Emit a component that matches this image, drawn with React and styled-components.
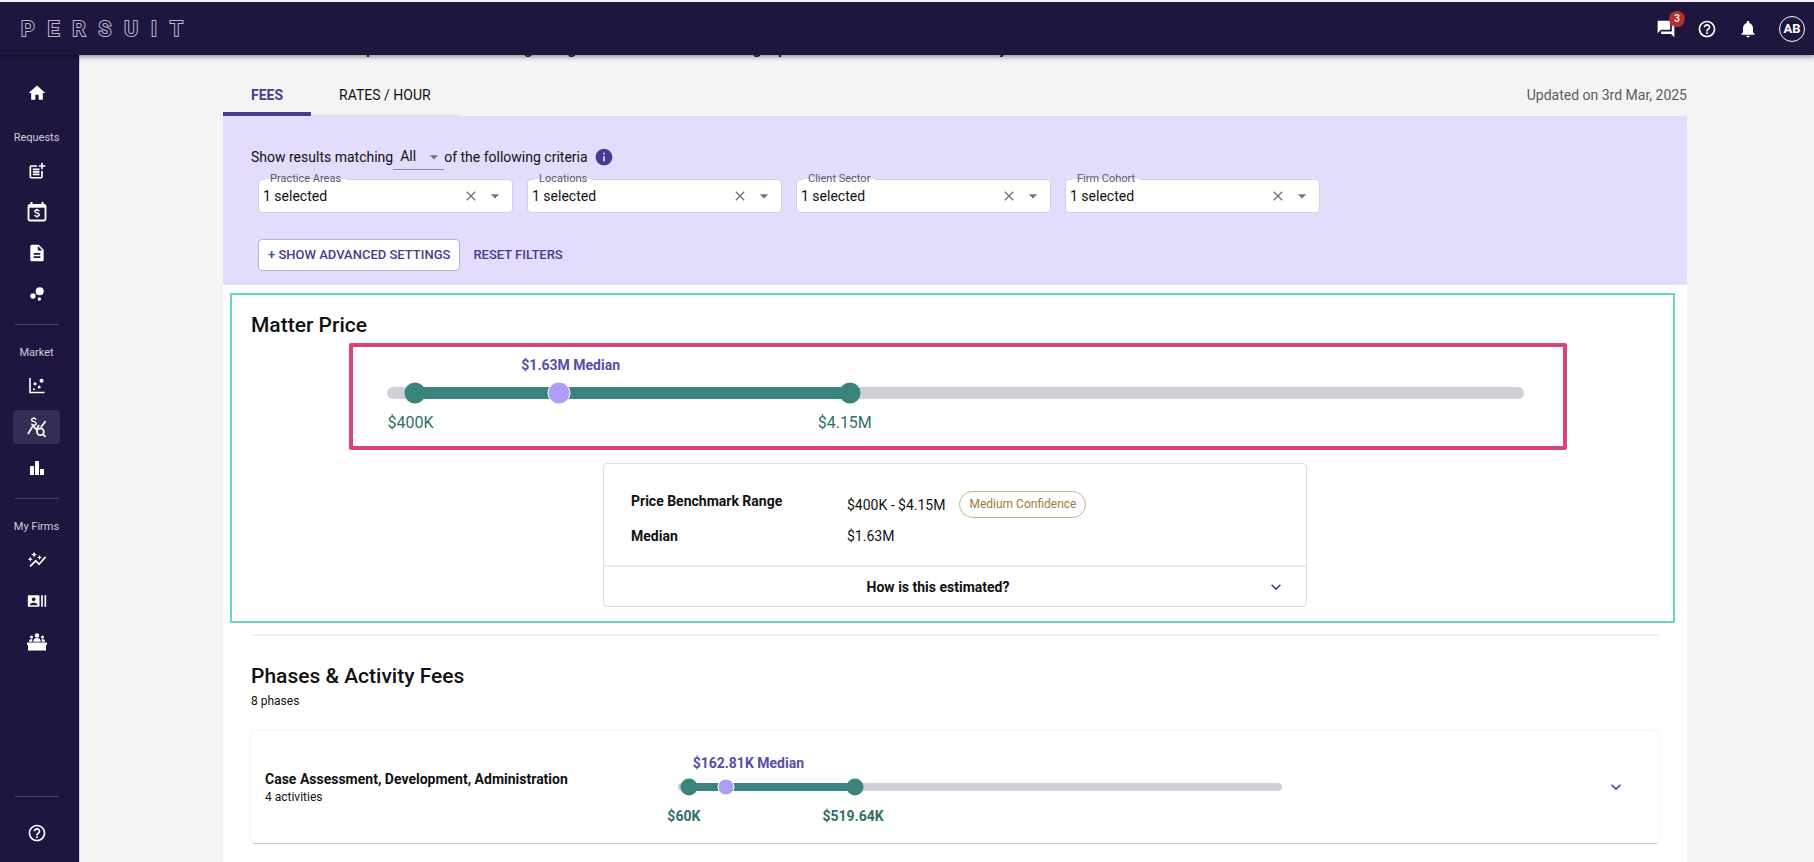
import React, { useState } from 'react';
import styled, { createGlobalStyle, css } from 'styled-components';
import {
  MdHome,
  MdPostAdd,
  MdDescription,
  MdBubbleChart,
  MdAutoGraph,
  MdRecentActors,
  MdHelpOutline,
  MdForum,
  MdNotifications,
  MdClose,
  MdArrowDropDown,
  MdExpandMore,
  MdInfo,
} from 'react-icons/md';

const navy = '#1e163e';
const purple = '#4b3b8f';
const lavender = '#e4dcfc';
const green = '#3b847d';

const GlobalStyle = createGlobalStyle`
  *, *::before, *::after {
    box-sizing: border-box;
  }
  body {
    margin: 0;
    background: #f4f4f4;
    color: #111;
    font-family: Roboto, "Liberation Sans", sans-serif;
    font-size: 14px;
    line-height: 20px;
  }
  button, select {
    font: inherit;
    color: inherit;
  }
  h2, p, dl, dt, dd {
    margin: 0;
  }
`;

const Page = styled.div`
  display: flex;
  flex-direction: column;
  min-height: 100vh;
`;

const Header = styled.header`
  position: relative;
  z-index: 2;
  display: flex;
  align-items: center;
  justify-content: space-between;
  height: 55px;
  padding: 0 9px 0 21px;
  border-top: 2px solid #f4f4f8;
  background: ${navy};
  color: #fff;
  box-shadow: 0 2px 5px rgba(0, 0, 0, 0.4);
`;

const Logo = styled.a`
  display: flex;
  gap: 13px;
  color: ${navy};
  font-size: 21px;
  line-height: 24px;
  font-weight: 500;
  text-decoration: none;
  -webkit-text-stroke: 2px #bdb9cc;
  paint-order: stroke fill;
`;

const HeaderActions = styled.div`
  display: flex;
  align-items: center;
  gap: 21px;
`;

const IconButton = styled.button`
  position: relative;
  display: flex;
  padding: 0;
  border: 0;
  background: none;
  color: inherit;
  cursor: pointer;
`;

const Badge = styled.span`
  position: absolute;
  top: -8px;
  right: -9px;
  width: 16px;
  height: 16px;
  border-radius: 50%;
  background: #b3302b;
  font-size: 10px;
  line-height: 16px;
  font-weight: 500;
  text-align: center;
`;

const Avatar = styled.button`
  width: 26px;
  height: 26px;
  padding: 0;
  border: 1px solid #fff;
  border-radius: 50%;
  background: none;
  color: #fff;
  font-size: 13px;
  line-height: 24px;
  font-weight: 700;
`;

const Body = styled.div`
  display: flex;
  flex: 1;
`;

const Sidebar = styled.nav`
  display: flex;
  flex-direction: column;
  flex: none;
  width: 79px;
  padding: 21px 19px 12px 13px;
  background: ${navy};
  box-shadow: 1px 0 0 #cfcdd8;
  color: #fff;
`;

const NavGroup = styled.div`
  display: flex;
  flex-direction: column;
  align-items: center;
  gap: 7px;
`;

const NavLabel = styled.span`
  margin: 20px 0 1px;
  color: #cfcdd8;
  font-size: 11px;
  line-height: 16px;
  white-space: nowrap;
`;

const NavLink = styled.a`
  display: flex;
  align-items: center;
  justify-content: center;
  width: 47px;
  height: 34px;
  border-radius: 4px;
  color: #fff;
  ${({ $active }) => $active && css`
    background: #352e54;
  `}
`;

const NavDivider = styled.hr`
  width: 44px;
  height: 1px;
  margin: ${({ $bottom }) => ($bottom ? 'auto auto 19px' : '13px auto 0')};
  border: 0;
  background: #4a4463;
`;

const Main = styled.main`
  display: flex;
  flex-direction: column;
  flex: 1;
  min-width: 0;
  padding: 0 127px 0 144px;
`;

const Intro = styled.p`
  margin-top: -18px;
  font-size: 16px;
  line-height: 24px;
  font-weight: 500;
  white-space: nowrap;
`;

const TabBar = styled.div`
  display: flex;
  align-items: center;
  justify-content: space-between;
  margin-top: 13px;
`;

const Tabs = styled.div`
  display: flex;
`;

const Tab = styled.button`
  height: 42px;
  padding: 0 28px;
  border: 0;
  background: none;
  color: ${({ $active }) => ($active ? purple : '#111')};
  font-weight: ${({ $active }) => ($active ? 700 : 400)};
  box-shadow: inset 0 ${({ $active }) => ($active ? `-4px 0 ${purple}` : '-1px 0 #dcdae2')};
`;

const Updated = styled.span`
  color: #5c5c5c;
`;

const Filters = styled.section`
  padding: 28px 28px 14px;
  background: ${lavender};
`;

const MatchRow = styled.div`
  display: flex;
  align-items: center;
  height: 26px;
  color: #111;
`;

const MatchSelect = styled.div`
  position: relative;
  width: 51px;
  height: 26px;
  border-bottom: 1px solid #8d88a0;
  svg {
    position: absolute;
    top: 3px;
    right: 0;
    color: #74717f;
    pointer-events: none;
  }
  select {
    width: 100%;
    height: 24px;
    padding: 0 7px;
    border: 0;
    background: none;
    appearance: none;
  }
`;

const InfoButton = styled(IconButton)`
  margin-left: 6px;
  color: ${purple};
`;

const FieldRow = styled.div`
  display: flex;
  flex-wrap: wrap;
  gap: 14px;
  padding: 9px 7px 0;
`;

const Field = styled.div`
  position: relative;
  width: 255px;
  height: 34px;
  label {
    position: absolute;
    top: -8px;
    left: 7px;
    padding: 0 5px;
    background: linear-gradient(${lavender} 50%, #fff 50%);
    color: #5b5866;
    font-size: 11px;
    line-height: 16px;
  }
  select {
    width: 100%;
    height: 100%;
    padding: 0 60px 0 4px;
    border: 1px solid #d3cfdf;
    border-radius: 4px;
    background: #fff;
    appearance: none;
  }
  > svg {
    position: absolute;
    top: 7px;
    right: 8px;
    color: #74717f;
    pointer-events: none;
  }
`;

const ClearButton = styled(IconButton)`
  position: absolute;
  top: 9px;
  right: 34px;
  color: #74717f;
`;

const FilterActions = styled.div`
  display: flex;
  align-items: center;
  gap: 13px;
  padding: 26px 7px 0;
`;

const FilterButton = styled.button`
  height: 32px;
  padding: ${({ $outlined }) => ($outlined ? '0 9px' : '0')};
  border: ${({ $outlined }) => ($outlined ? '1px solid #b9aee0' : '0')};
  border-radius: 4px;
  background: ${({ $outlined }) => ($outlined ? '#fff' : 'none')};
  color: ${purple};
  font-size: 13px;
  font-weight: 500;
  white-space: nowrap;
`;

const Results = styled.div`
  flex: 1;
  padding-bottom: 19px;
  background: #fff;
`;

const MatterPrice = styled.section`
  margin: 8px 12px 0 7px;
  padding: 18px 14px 14px 19px;
  border: 2px solid #6dd3c8;
`;

const Heading = styled.h2`
  color: #111;
  font-size: 21px;
  line-height: 24px;
  font-weight: 500;
`;

const Highlight = styled.div`
  margin: 6px 92px 0 98px;
  padding: 8px 39px 13px 34px;
  border: 4px solid #d9447f;
  border-radius: 2px;
`;

const Range = styled.div`
  --track: ${({ $small }) => ($small ? 8 : 12)}px;
  --dot: ${({ $small }) => ($small ? 17 : 21)}px;
  --drop: ${({ $small }) => ($small ? 5 : 2)}px;
  display: flex;
  flex-direction: column;
  gap: ${({ $small }) => ($small ? 10 : 12)}px;
  min-width: 0;
  padding-top: ${({ $small }) => ($small ? 5 : 0)}px;
`;

const RangeLabels = styled.div`
  position: relative;
  height: 20px;
  ${({ $below }) => $below && css`
    margin-top: var(--drop);
  `}
`;

const RangeLabel = styled.span`
  position: absolute;
  margin-left: ${({ $shift }) => $shift}px;
  color: ${({ $median }) => ($median ? '#5d4ba6' : '#2f7068')};
  font-size: ${({ $large }) => ($large ? 16 : 14)}px;
  font-weight: ${({ $large }) => ($large ? 400 : 700)};
  white-space: nowrap;
  transform: translateX(-50%);
`;

const Track = styled.div`
  position: relative;
  height: var(--track);
  border-radius: 6px;
  background: #d0cfd5;
`;

const Fill = styled.div`
  position: absolute;
  top: 0;
  height: 100%;
  background: ${green};
`;

const Dot = styled.span`
  position: absolute;
  top: 50%;
  width: var(--dot);
  height: var(--dot);
  border-radius: 50%;
  background: ${green};
  transform: translate(-50%, -50%);
  ${({ $median }) => $median && css`
    box-sizing: ${({ $small }) => ($small ? 'border-box' : 'content-box')};
    border: 1px solid #fff;
    background: #ad9df5;
  `}
`;

const Benchmark = styled.div`
  width: 50%;
  margin: 13px auto 0;
  border: 1px solid #dcdcdc;
  border-radius: 4px;
`;

const BenchmarkList = styled.dl`
  display: grid;
  grid-template-columns: 216px 1fr;
  row-gap: 8px;
  padding: 27px 27px 19px;
  dt {
    font-weight: 700;
  }
  dd {
    display: flex;
    align-items: center;
    gap: 14px;
  }
`;

const Chip = styled.span`
  height: 27px;
  padding: 0 9px;
  border: 1px solid #cdb084;
  border-radius: 14px;
  color: #a17a3a;
  font-size: 12px;
  line-height: 25px;
`;

const EstimateToggle = styled.button`
  display: flex;
  align-items: center;
  width: 100%;
  height: 41px;
  padding: 0 20px 0 6px;
  border: 0;
  border-top: 2px solid #ececec;
  background: none;
  font-weight: 700;
  span {
    flex: 1;
  }
  svg {
    color: ${purple};
  }
`;

const Divider = styled.hr`
  height: 2px;
  margin: 11px 28px 0;
  border: 0;
  background: #f0f0f0;
`;

const Phases = styled.section`
  padding: 28px 28px 0;
`;

const Note = styled.p`
  color: #111;
  font-size: 12px;
  line-height: 16px;
`;

const PhaseCount = styled(Note)`
  margin-top: 5px;
`;

const PhaseCard = styled.article`
  display: grid;
  grid-template-columns: 41fr 60fr 36fr;
  align-items: center;
  height: 112px;
  margin-top: 22px;
  padding: 0 14px;
  border-radius: 4px;
  background: #fff;
  box-shadow: 0 2px 1px -1px rgba(0, 0, 0, 0.2), 0 0 2px rgba(0, 0, 0, 0.14);
`;

const PhaseName = styled.h3`
  margin: 0;
  font-size: 14px;
  line-height: 20px;
  font-weight: 700;
`;

const ExpandButton = styled(IconButton)`
  justify-self: end;
  margin-right: 19px;
  color: ${purple};
`;

function CalendarDollarIcon() {
  return (
    <svg width="20" height="22" viewBox="0 0 20 22" fill="none" stroke="currentColor">
      <rect x="1.5" y="4" width="17" height="15.5" rx="1.5" strokeWidth="1.8" />
      <path d="M1.5 5.2h17" strokeWidth="3" />
      <path d="M4.5 1v3M15.5 1v3" strokeWidth="2" />
      <path d="M12.2 10.2c-.3-.9-1.1-1.2-2.2-1.2-1.2 0-2.1.5-2.1 1.5 0 2 4.4.9 4.4 3.1 0 1-.9 1.6-2.3 1.6-1.3 0-2.2-.5-2.4-1.4M10 7.7V9M10 15.2v1.4" strokeWidth="1.4" />
    </svg>
  );
}

function ScatterIcon() {
  return (
    <svg width="18" height="18" viewBox="0 0 18 18" fill="currentColor">
      <path d="M2 1v14.5h14.5" fill="none" stroke="currentColor" strokeWidth="1.6" />
      <circle cx="13.5" cy="3.8" r="2" />
      <circle cx="7" cy="6.8" r="1.5" />
      <circle cx="11.2" cy="10" r="1.5" />
      <circle cx="6" cy="12.2" r="1" />
    </svg>
  );
}

function PriceSearchIcon() {
  return (
    <svg width="20" height="22" viewBox="0 0 20 22" fill="none" stroke="currentColor" strokeWidth="1.7">
      <path d="M1 18l5-8.2 3.2 3.8L12 9M13.8 11.5L18.6 5" />
      <circle cx="13.4" cy="15.8" r="3.4" />
      <path d="M15.8 18.2l2.8 2.8" />
      <path d="M9 3.8C8.7 2.8 8 2.4 6.8 2.4c-1.3 0-2.2.6-2.2 1.6 0 2.2 4.7 1.1 4.7 3.5 0 1-.9 1.7-2.4 1.7-1.3 0-2.3-.6-2.5-1.6M6.900 1v1.500M6.900 9.200v1.500" strokeWidth="1.4" />
    </svg>
  );
}

function BarsIcon() {
  return (
    <svg width="16" height="16" viewBox="0 0 16 16" fill="currentColor">
      <rect x="1" y="6" width="4" height="9" rx="0.5" />
      <rect x="6" y="1" width="4" height="14" rx="0.5" />
      <rect x="11" y="9" width="4" height="6" rx="0.5" />
    </svg>
  );
}

function PanelIcon() {
  return (
    <svg width="20" height="18" viewBox="0 0 20 18" fill="currentColor">
      <path d="M0 9.500h20v2.500h-1v5.500H1V12H0z" />
      <circle cx="10" cy="2.500" r="2.200" />
      <path d="M6.300 8.700c0-2.500 1.300-3.700 3.700-3.700s3.700 1.200 3.700 3.700z" />
      <circle cx="4.500" cy="4" r="1.500" />
      <circle cx="15.500" cy="4" r="1.500" />
      <path d="M2 8.700c0-2 .8-2.800 3.200-2.800.1.800.1 1.800.1 2.800zM18 8.700c0-2-.8-2.800-3.200-2.800-.1.800-.1 1.800-.1 2.800z" />
    </svg>
  );
}

const navGroups = [
  {
    label: 'Requests',
    links: [
      { name: 'New request', icon: <MdPostAdd size={20} /> },
      { name: 'Quotes', icon: <CalendarDollarIcon /> },
      { name: 'Documents', icon: <MdDescription size={20} /> },
      { name: 'Insights', icon: <MdBubbleChart size={20} /> },
    ],
  },
  {
    label: 'Market',
    links: [
      { name: 'Scatter', icon: <ScatterIcon /> },
      { name: 'Pricing', icon: <PriceSearchIcon />, active: true },
      { name: 'Reports', icon: <BarsIcon /> },
    ],
  },
  {
    label: 'My Firms',
    links: [
      { name: 'Trends', icon: <MdAutoGraph size={20} /> },
      { name: 'Contacts', icon: <MdRecentActors size={20} /> },
      { name: 'Panels', icon: <PanelIcon /> },
    ],
  },
];

const fields = ['Practice Areas', 'Locations', 'Client Sector', 'Firm Cohort'];

function PriceRange({ low, median, high, small }) {
  return (
    <Range $small={small}>
      <RangeLabels>
        <RangeLabel $median $shift={median.shift} style={{ left: `${median.at}%` }}>{median.text} Median</RangeLabel>
      </RangeLabels>
      <Track>
        <Fill style={{ left: `${low.at}%`, width: `${high.at - low.at}%` }} />
        <Dot style={{ left: `${low.at}%` }} />
        <Dot $median $small={small} style={{ left: `${median.at}%` }} />
        <Dot style={{ left: `${high.at}%` }} />
      </Track>
      <RangeLabels $below>
        <RangeLabel $large={!small} $shift={low.shift} style={{ left: `${low.at}%` }}>{low.text}</RangeLabel>
        <RangeLabel $large={!small} $shift={high.shift} style={{ left: `${high.at}%` }}>{high.text}</RangeLabel>
      </RangeLabels>
    </Range>
  );
}

function FilterField({ label }) {
  const id = label.toLowerCase().replace(' ', '-');

  return (
    <Field>
      <select id={id}>
        <option>1 selected</option>
      </select>
      <label htmlFor={id}>{label}</label>
      <ClearButton type="button" aria-label={`Clear ${label}`}><MdClose size={16} /></ClearButton>
      <MdArrowDropDown size={20} />
    </Field>
  );
}

function App() {
  const [tab, setTab] = useState('fees');

  return (
    <Page>
      <GlobalStyle />
      <Header>
        <Logo href="#" aria-label="PERSUIT">
          {'PERSUIT'.split('').map(letter => <span key={letter}>{letter}</span>)}
        </Logo>
        <HeaderActions>
          <IconButton type="button" aria-label="Messages">
            <MdForum size={20} />
            <Badge>3</Badge>
          </IconButton>
          <IconButton type="button" aria-label="Help"><MdHelpOutline size={20} /></IconButton>
          <IconButton type="button" aria-label="Notifications"><MdNotifications size={20} /></IconButton>
          <Avatar type="button">AB</Avatar>
        </HeaderActions>
      </Header>
      <Body>
        <Sidebar>
          <NavGroup>
            <NavLink href="#" aria-label="Home"><MdHome size={20} /></NavLink>
          </NavGroup>
          {navGroups.map((group, i) => (
            <React.Fragment key={group.label}>
              {i > 0 && <NavDivider />}
              <NavGroup>
                <NavLabel>{group.label}</NavLabel>
                {group.links.map(link => (
                  <NavLink key={link.name} href="#" aria-label={link.name} $active={link.active}>
                    {link.icon}
                  </NavLink>
                ))}
              </NavGroup>
            </React.Fragment>
          ))}
          <NavDivider $bottom />
          <NavGroup>
            <NavLink href="#" aria-label="Support"><MdHelpOutline size={20} /></NavLink>
          </NavGroup>
        </Sidebar>
        <Main>
          <Intro>Estimates of a total price for matters billing and global market fee including a panel rate in each home country</Intro>
          <TabBar>
            <Tabs role="tablist">
              <Tab type="button" role="tab" $active={tab === 'fees'} onClick={() => setTab('fees')}>FEES</Tab>
              <Tab type="button" role="tab" $active={tab === 'rates'} onClick={() => setTab('rates')}>RATES / HOUR</Tab>
            </Tabs>
            <Updated>Updated on 3rd Mar, 2025</Updated>
          </TabBar>
          <Filters>
            <MatchRow>
              <label htmlFor="match">Show results matching</label>
              <MatchSelect>
                <select id="match">
                  <option>All</option>
                  <option>Any</option>
                </select>
                <MdArrowDropDown size={20} />
              </MatchSelect>
              <span>of the following criteria</span>
              <InfoButton type="button" aria-label="About criteria"><MdInfo size={20} /></InfoButton>
            </MatchRow>
            <FieldRow>
              {fields.map(label => <FilterField key={label} label={label} />)}
            </FieldRow>
            <FilterActions>
              <FilterButton type="button" $outlined>+ SHOW ADVANCED SETTINGS</FilterButton>
              <FilterButton type="button">RESET FILTERS</FilterButton>
            </FilterActions>
          </Filters>
          <Results>
            <MatterPrice>
              <Heading>Matter Price</Heading>
              <Highlight>
                <PriceRange
                  low={{ at: 2.5, text: '$400K', shift: -5 }}
                  median={{ at: 15.1, text: '$1.63M', shift: 12 }}
                  high={{ at: 40.7, text: '$4.15M', shift: -5 }}
                />
              </Highlight>
              <Benchmark>
                <BenchmarkList>
                  <dt>Price Benchmark Range</dt>
                  <dd>$400K - $4.15M <Chip>Medium Confidence</Chip></dd>
                  <dt>Median</dt>
                  <dd>$1.63M</dd>
                </BenchmarkList>
                <EstimateToggle type="button">
                  <span>How is this estimated?</span>
                  <MdExpandMore size={20} />
                </EstimateToggle>
              </Benchmark>
            </MatterPrice>
            <Divider />
            <Phases>
              <Heading>Phases &amp; Activity Fees</Heading>
              <PhaseCount>8 phases</PhaseCount>
              <PhaseCard>
                <div>
                  <PhaseName>Case Assessment, Development, Administration</PhaseName>
                  <Note>4 activities</Note>
                </div>
                <PriceRange
                  small
                  low={{ at: 1.8, text: '$60K', shift: -5 }}
                  median={{ at: 8, text: '$162.81K', shift: 22 }}
                  high={{ at: 29.3, text: '$519.64K', shift: -2 }}
                />
                <ExpandButton type="button" aria-label="Expand phase"><MdExpandMore size={20} /></ExpandButton>
              </PhaseCard>
            </Phases>
          </Results>
        </Main>
      </Body>
    </Page>
  );
}

export default App;
